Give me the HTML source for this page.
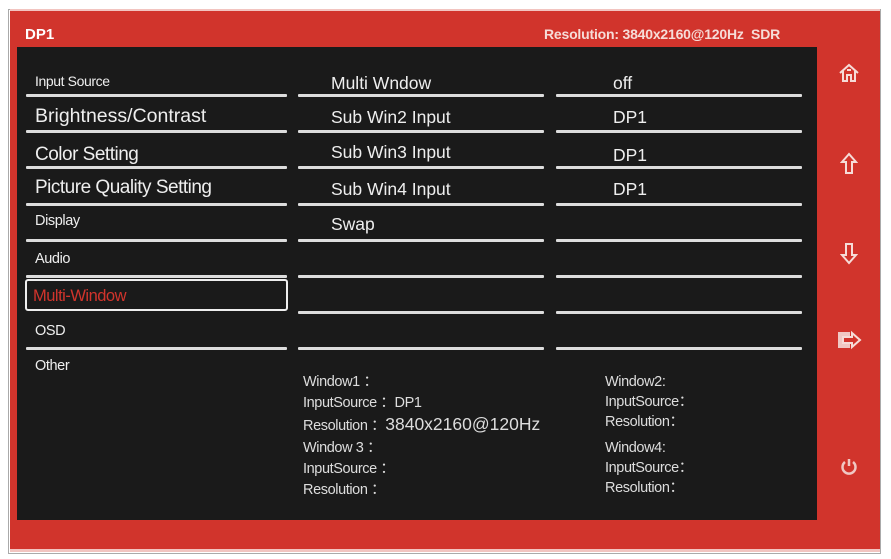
<!DOCTYPE html>
<html><head><style>
*{margin:0;padding:0;box-sizing:border-box}
body{width:891px;height:559px;background:#fff;position:relative;overflow:hidden;font-family:"Liberation Sans",Arial,sans-serif}
.frame{position:absolute;left:8px;top:9px;width:873px;height:545px;border:1px solid #aaa;background:#fff}
.red{position:absolute;left:10px;top:11px;width:870px;height:538px;background:#d1342c}
.pink{position:absolute;left:10px;top:549px;width:870px;height:3px;background:#f2c4c0}
.pinkt{position:absolute;left:10px;top:9px;width:870px;height:2px;background:#f2c4c0}
.panel{position:absolute;left:17px;top:47px;width:800px;height:473px;background:#1a1a1a}
.t{position:absolute;color:#eee;white-space:nowrap}
.hl{position:absolute;height:3px;background:#ddd;border-radius:1px}
.ic{position:absolute}
</style></head><body>
<div class="frame"></div>
<div class="red"></div>
<div class="pinkt"></div>
<div class="pink"></div>
<div class="t" style="left:25px;top:26px;font-size:15px;font-weight:bold;color:#fff">DP1</div>
<div class="t" style="left:544px;top:26px;font-size:14px;font-weight:bold;color:#f6dcd8;letter-spacing:-0.2px">Resolution: 3840x2160@120Hz&nbsp; SDR</div>
<div class="panel"></div>

<!-- left column -->
<div class="t" style="left:35px;top:73px;font-size:14px;letter-spacing:-0.4px">Input Source</div>
<div class="t" style="left:35px;top:105px;font-size:19.5px">Brightness/Contrast</div>
<div class="t" style="left:35px;top:144px;font-size:19px;letter-spacing:-0.5px">Color Setting</div>
<div class="t" style="left:35px;top:177px;font-size:19px;letter-spacing:-0.5px">Picture Quality Setting</div>
<div class="t" style="left:35px;top:213px;font-size:14.5px;letter-spacing:-0.4px">Display</div>
<div class="t" style="left:35px;top:251px;font-size:14.5px;letter-spacing:-0.4px">Audio</div>
<div style="position:absolute;left:25px;top:279px;width:263px;height:32px;border:2px solid #eee;border-radius:3px"></div>
<div class="t" style="left:33px;top:287px;font-size:16.5px;color:#d1342c;letter-spacing:-0.5px">Multi-Window</div>
<div class="t" style="left:35px;top:323px;font-size:14.5px;letter-spacing:-0.4px">OSD</div>
<div class="t" style="left:35px;top:358px;font-size:14.5px;letter-spacing:-0.4px">Other</div>
<div class="hl" style="left:26px;top:94px;width:261px"></div>
<div class="hl" style="left:26px;top:130px;width:261px"></div>
<div class="hl" style="left:26px;top:166px;width:261px"></div>
<div class="hl" style="left:26px;top:203px;width:261px"></div>
<div class="hl" style="left:26px;top:239px;width:261px"></div>
<div class="hl" style="left:26px;top:275px;width:261px"></div>
<div class="hl" style="left:26px;top:347px;width:261px"></div>

<!-- middle column -->
<div class="t" style="left:331px;top:73px;font-size:17.5px">Multi Wndow</div>
<div class="t" style="left:331px;top:107px;font-size:17.5px">Sub Win2 Input</div>
<div class="t" style="left:331px;top:142px;font-size:17.5px">Sub Win3 Input</div>
<div class="t" style="left:331px;top:179px;font-size:17.5px">Sub Win4 Input</div>
<div class="t" style="left:331px;top:214px;font-size:17.5px">Swap</div>
<div class="t" style="left:613px;top:73px;font-size:17.5px">off</div>
<div class="t" style="left:613px;top:107px;font-size:17.5px">DP1</div>
<div class="t" style="left:613px;top:145px;font-size:17.5px">DP1</div>
<div class="t" style="left:613px;top:179px;font-size:17.5px">DP1</div>

<div class="hl" style="left:298px;top:94px;width:246px"></div>
<div class="hl" style="left:298px;top:130px;width:246px"></div>
<div class="hl" style="left:298px;top:166px;width:246px"></div>
<div class="hl" style="left:298px;top:203px;width:246px"></div>
<div class="hl" style="left:298px;top:239px;width:246px"></div>
<div class="hl" style="left:298px;top:275px;width:246px"></div>
<div class="hl" style="left:298px;top:311px;width:246px"></div>
<div class="hl" style="left:298px;top:347px;width:246px"></div>
<div class="hl" style="left:556px;top:94px;width:246px"></div>
<div class="hl" style="left:556px;top:130px;width:246px"></div>
<div class="hl" style="left:556px;top:166px;width:246px"></div>
<div class="hl" style="left:556px;top:203px;width:246px"></div>
<div class="hl" style="left:556px;top:239px;width:246px"></div>
<div class="hl" style="left:556px;top:275px;width:246px"></div>
<div class="hl" style="left:556px;top:311px;width:246px"></div>
<div class="hl" style="left:556px;top:347px;width:246px"></div>

<!-- info -->
<div style="position:absolute;left:303px;top:372px;font-size:14.5px;color:#ddd;line-height:21px;letter-spacing:-0.4px">
Window1 ：<br>InputSource ：DP1<br>Resolution ：<span style="font-size:17.5px;letter-spacing:0">3840x2160@120Hz</span><br>
</div>
<div style="position:absolute;left:303px;top:438px;font-size:14.5px;color:#ddd;line-height:21px;letter-spacing:-0.4px">
Window 3 ：<br>InputSource ：<br>Resolution ：
</div>
<div style="position:absolute;left:605px;top:372px;font-size:14.5px;color:#ddd;line-height:20px;letter-spacing:-0.4px">
Window2:<br>InputSource：<br>Resolution：
</div>
<div style="position:absolute;left:605px;top:438px;font-size:14.5px;color:#ddd;line-height:20px;letter-spacing:-0.4px">
Window4:<br>InputSource：<br>Resolution：
</div>

<!-- icons -->
<svg class="ic" style="left:838px;top:62px" width="22" height="22" viewBox="0 0 22 22" fill="none" stroke="#f6dcd8" stroke-width="2">
<path d="M2 11 L11 3 L20 11"/><path d="M5 9 V19 H9 V13 H13 V19 H17 V9"/><path d="M9 8 H13"/></svg>
<svg class="ic" style="left:840px;top:152px" width="18" height="24" viewBox="0 0 18 24" fill="none" stroke="#f6dcd8" stroke-width="2">
<path d="M9 2 L2 10 H6 V21 H12 V10 H16 Z"/></svg>
<svg class="ic" style="left:840px;top:241px" width="18" height="24" viewBox="0 0 18 24" fill="none" stroke="#f6dcd8" stroke-width="2">
<path d="M9 22 L2 14 H6 V3 H12 V14 H16 Z"/></svg>
<svg class="ic" style="left:836px;top:329px" width="26" height="22" viewBox="0 0 26 22">
<rect x="2" y="3" width="12" height="16" fill="#f0c8c4"/>
<path d="M7 8 H16 V4 L24 11 L16 18 V14 H7 Z" fill="#d1342c" stroke="#f6dcd8" stroke-width="2"/></svg>
<svg class="ic" style="left:839px;top:456px" width="20" height="20" viewBox="0 0 20 20" fill="none" stroke="#f0c8c4" stroke-width="2.5">
<path d="M6 6 A6.5 6.5 0 1 0 14 6"/><path d="M10 3 V10"/></svg>
</body></html>
